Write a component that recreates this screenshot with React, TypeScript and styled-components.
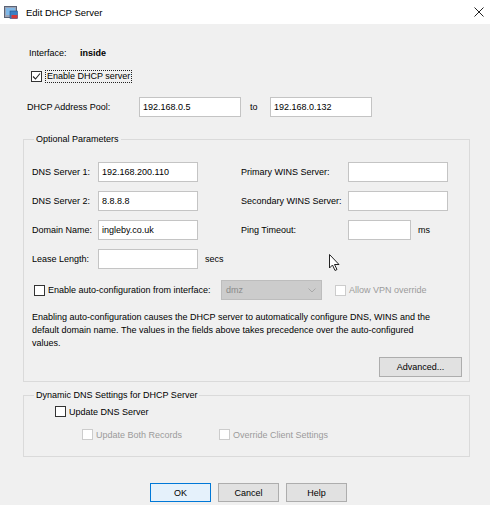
import styled, { createGlobalStyle } from "styled-components";

const GlobalStyle = createGlobalStyle`
    html, body {
        margin: 0;
        padding: 0;
        background: #f0f0f0;
    }
    body {
        font-family: "Liberation Sans", Arial, sans-serif;
        font-size: 9px;
        color: #000;
    }
`;

const Window = styled.div`
    width: 490px;
    height: 505px;
    background: #f0f0f0;
    position: relative;
    overflow: hidden;
`;

const TitleBar = styled.div`
    height: 24px;
    background: #ffffff;
    display: flex;
    align-items: center;
    padding: 0 6px 0 4px;
`;

const TitleText = styled.span`
    font-size: 9.5px;
    margin-left: 8px;
    flex: 1;
`;

const Body = styled.div`
    display: flex;
    flex-direction: column;
    padding: 0 20px 0 23px;
`;

const Row = styled.div<{ $top: number; $left?: number; $h?: number }>`
    display: flex;
    align-items: center;
    height: ${(p) => p.$h ?? 12}px;
    margin-top: ${(p) => p.$top}px;
    margin-left: ${(p) => p.$left ?? 0}px;
`;

const Label = styled.span<{ $w?: number; $bold?: boolean; $dim?: boolean }>`
    display: inline-block;
    width: ${(p) => (p.$w ? `${p.$w}px` : "auto")};
    flex-shrink: 0;
    font-weight: ${(p) => (p.$bold ? "bold" : "normal")};
    color: ${(p) => (p.$dim ? "#9b9b9b" : "#000")};
    white-space: nowrap;
`;

const Focus = styled.span`
    border: 1px dotted #222;
    padding: 0 1px;
    line-height: 11px;
`;

const Input = styled.div<{ $w?: number }>`
    width: ${(p) => p.$w ?? 100}px;
    height: 20px;
    box-sizing: border-box;
    background: #fff;
    border: 1px solid #c4c4c4;
    padding-left: 3px;
    display: flex;
    align-items: center;
    flex-shrink: 0;
`;

const Box = styled.span<{ $dim?: boolean }>`
    width: 11px;
    height: 11px;
    box-sizing: border-box;
    background: #fff;
    border: 1px solid ${(p) => (p.$dim ? "#cccccc" : "#333")};
    display: inline-flex;
    align-items: center;
    justify-content: center;
    flex-shrink: 0;
    margin-right: 3px;
`;

const Group = styled.fieldset<{ $top: number; $bottom: number }>`
    margin: ${(p) => p.$top}px 0 0 0;
    padding: 0 7px ${(p) => p.$bottom}px 8px;
    border: 1px solid #dadada;
    min-width: 0;
`;

const Legend = styled.legend`
    padding: 0 2px;
    margin-left: 2px;
    line-height: 12px;
`;

const Grid = styled.div`
    display: grid;
    grid-template-columns: 66px 100px 43px 107px 100px;
    grid-auto-rows: 20px;
    row-gap: 9px;
    margin-top: 17px;
    align-items: center;
`;

const Cell = styled.div<{ $pad?: number }>`
    display: flex;
    align-items: center;
    padding-left: ${(p) => p.$pad ?? 0}px;
`;

const Select = styled.div`
    width: 101px;
    height: 20px;
    box-sizing: border-box;
    background: #cccccc;
    border: 1px solid #bdbdbd;
    color: #8a8a8a;
    display: flex;
    align-items: center;
    justify-content: space-between;
    padding: 0 5px 0 4px;
    flex-shrink: 0;
    margin-right: 13px;
`;

const Paragraph = styled.p`
    margin: 11px 0 0 0;
    line-height: 13px;
`;

const Button = styled.div<{ $w: number; $primary?: boolean }>`
    width: ${(p) => p.$w}px;
    height: ${(p) => (p.$primary !== undefined ? 19 : 20)}px;
    box-sizing: border-box;
    background: ${(p) => (p.$primary ? "#e5f1fb" : "#e1e1e1")};
    border: 1px solid ${(p) => (p.$primary ? "#0078d7" : "#adadad")};
    display: flex;
    align-items: center;
    justify-content: center;
`;

const RightAlign = styled.div`
    display: flex;
    justify-content: flex-end;
    margin-top: 7px;
`;

const Buttons = styled.div`
    display: flex;
    gap: 7px;
    margin: 26px 0 0 127px;
`;

const Cursor = styled.svg`
    position: absolute;
    left: 329px;
    top: 254px;
`;

const Check = () => (
    <svg width="9" height="9" viewBox="0 0 9 9">
        <path d="M1 4.5 L3.5 7 L8 1.5" fill="none" stroke="#222" strokeWidth="1.1" />
    </svg>
);

const AppIcon = () => (
    <svg width="14" height="14" viewBox="0 0 14 14">
        <rect x="0.5" y="1.5" width="12" height="11" fill="#9aa3b5" stroke="#5a6275" />
        <rect x="2" y="3" width="9" height="7" fill="#7fb8e8" />
        <rect x="6" y="6" width="7.5" height="7.5" fill="#3b7fc4" stroke="#23528a" strokeWidth="0.6" />
        <rect x="7.5" y="10" width="6" height="3.5" fill="#d33a3a" />
    </svg>
);

export default function App() {
    return (
        <Window>
            <GlobalStyle />
            <TitleBar>
                <AppIcon />
                <TitleText>Edit DHCP Server</TitleText>
                <svg width="10" height="10" viewBox="0 0 10 10">
                    <path d="M0.5 0.5 L9.5 9.5 M9.5 0.5 L0.5 9.5" stroke="#222" strokeWidth="1" />
                </svg>
            </TitleBar>
            <Body>
                <Row $top={23} $left={6}>
                    <Label $w={51}>Interface:</Label>
                    <Label $bold>inside</Label>
                </Row>
                <Row $top={11} $left={8}>
                    <Box><Check /></Box>
                    <Focus>Enable DHCP server</Focus>
                </Row>
                <Row $top={15} $left={4} $h={20}>
                    <Label $w={112}>DHCP Address Pool:</Label>
                    <Input $w={102}>192.168.0.5</Input>
                    <Label $w={29} style={{ paddingLeft: 9, boxSizing: "border-box" }}>to</Label>
                    <Input $w={102}>192.168.0.132</Input>
                </Row>

                <Group $top={16} $bottom={4}>
                    <Legend>Optional Parameters</Legend>
                    <Grid>
                        <Label>DNS Server 1:</Label>
                        <Input>192.168.200.110</Input>
                        <span />
                        <Label>Primary WINS Server:</Label>
                        <Input />

                        <Label>DNS Server 2:</Label>
                        <Input>8.8.8.8</Input>
                        <span />
                        <Label>Secondary WINS Server:</Label>
                        <Input />

                        <Label>Domain Name:</Label>
                        <Input>ingleby.co.uk</Input>
                        <span />
                        <Label>Ping Timeout:</Label>
                        <Cell>
                            <Input $w={63} />
                            <Label style={{ marginLeft: 7 }}>ms</Label>
                        </Cell>

                        <Label>Lease Length:</Label>
                        <Input />
                        <Cell $pad={7}>secs</Cell>
                        <span />
                        <span />
                    </Grid>
                    <Row $top={11} $left={2} $h={20}>
                        <Box />
                        <Label $w={173}>Enable auto-configuration from interface:</Label>
                        <Select>
                            <span>dmz</span>
                            <svg width="8" height="5" viewBox="0 0 8 5">
                                <path d="M0.5 0.5 L4 4 L7.5 0.5" fill="none" stroke="#a8a8a8" strokeWidth="1" />
                            </svg>
                        </Select>
                        <Box $dim />
                        <Label $dim>Allow VPN override</Label>
                    </Row>
                    <Paragraph>
                        Enabling auto-configuration causes the DHCP server to automatically configure DNS, WINS and the
                        <br />
                        default domain name. The values in the fields above takes precedence over the auto-configured
                        <br />
                        values.
                    </Paragraph>
                    <RightAlign>
                        <Button $w={83}>Advanced...</Button>
                    </RightAlign>
                </Group>

                <Group $top={7} $bottom={15}>
                    <Legend>Dynamic DNS Settings for DHCP Server</Legend>
                    <Row $top={4} $left={23} $h={13}>
                        <Box />
                        <Label>Update DNS Server</Label>
                    </Row>
                    <Row $top={10} $left={50} $h={13}>
                        <Cell style={{ width: 137 }}>
                            <Box $dim />
                            <Label $dim>Update Both Records</Label>
                        </Cell>
                        <Box $dim />
                        <Label $dim>Override Client Settings</Label>
                    </Row>
                </Group>

                <Buttons>
                    <Button $w={61} $primary>OK</Button>
                    <Button $w={61} $primary={false}>Cancel</Button>
                    <Button $w={61} $primary={false}>Help</Button>
                </Buttons>
            </Body>
            <Cursor width="12" height="18" viewBox="0 0 12 18">
                <path d="M0.5 0.5 L0.5 14 L3.5 11 L6 16.5 L8 15.5 L5.5 10.5 L10 10.5 Z" fill="#fff" stroke="#222" strokeWidth="1" strokeLinejoin="round" />
            </Cursor>
        </Window>
    );
}
